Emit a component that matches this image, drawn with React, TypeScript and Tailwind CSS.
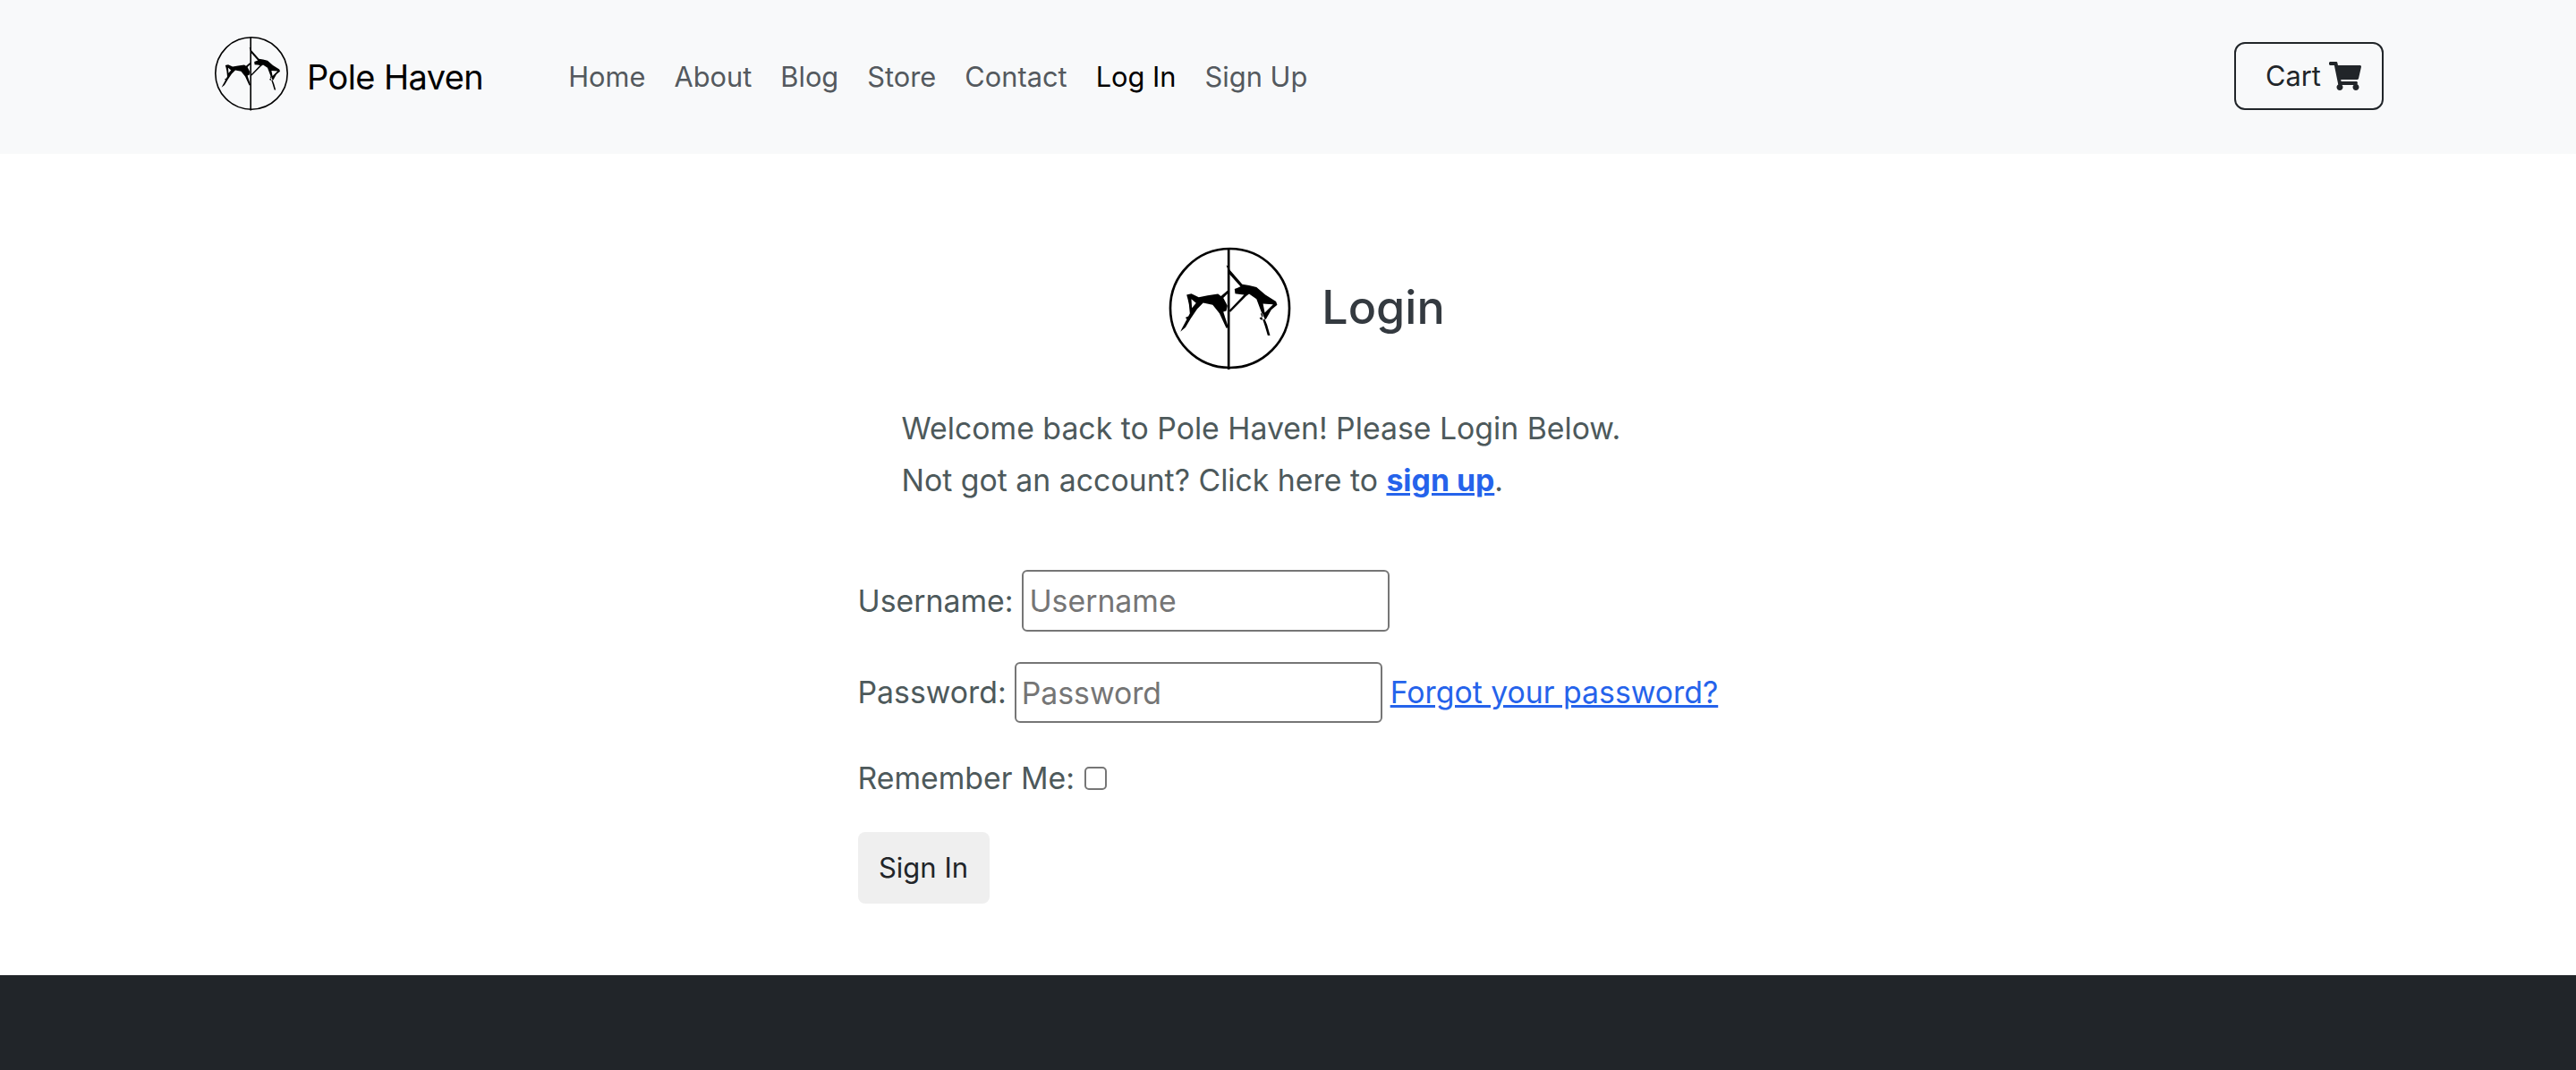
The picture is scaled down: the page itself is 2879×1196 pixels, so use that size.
import { FaShoppingCart } from "react-icons/fa";

function Logo({ className }: { className: string }) {
  return (
    <svg viewBox="70 43 420 420" className={className}>
      <circle cx="280" cy="253" r="201" fill="none" stroke="#000" strokeWidth="8" />
      <line x1="276" y1="50" x2="276" y2="460" stroke="#000" strokeWidth="8" />
      <path
        fillRule="evenodd"
        d="M134 208 L150 204 L175 216 L205 210 L240 205 L250 212 L272 193 L276 200 L258 218 L272 245 L268 262 L258 265 L275 318 L268 320 L245 270 L222 242 L190 235 L170 255 L148 288 L130 318 L113 332 L118 322 L135 290 L130 285 L140 280 L145 270 L142 240 L138 222 Z M150 222 L152 252 L166 236 Z"
        fill="#000"
      />
      <path
        fillRule="evenodd"
        d="M268 108 L276 112 L280 124 L322 172 L345 176 L370 182 L400 208 L436 230 L440 242 L420 258 L402 290 L385 292 L380 286 L392 280 L385 262 L370 222 L345 205 L335 212 L282 266 L276 262 L328 208 L315 206 L298 204 L296 188 L306 184 L316 180 L276 135 L272 118 Z M392 238 L398 268 L426 240 Z M390 270 L406 310 L416 345 L408 345 L398 312 L384 270 Z"
        fill="#000"
      />
    </svg>
  );
}

const links = ["Home", "About", "Blog", "Store", "Contact", "Log In", "Sign Up"];

export default function App() {
  return (
    <div className="min-h-[1196px] flex flex-col bg-white text-[33.8px] leading-[50px] text-[#4d595b] [font-family:Inter,sans-serif]">
      <nav className="h-[172px] bg-[#f8f9fa] flex items-center pl-[239px] pr-[215px] text-[30.8px]">
        <div className="flex items-center gap-[20px] text-[38px] text-black tracking-[-0.6px] pb-[1px]">
          <Logo className="w-[84px] h-[84px] -translate-y-[4px]" />
          <span>Pole Haven</span>
        </div>
        <ul className="flex ml-[95px] gap-[32px] grow">
          {links.map((l) => (
            <li key={l} className={l === "Log In" ? "text-black" : "text-[#54595e]"}>
              {l}
            </li>
          ))}
        </ul>
        <button className="w-[167px] h-[76px] -translate-y-[1px] border-2 border-[#212529] rounded-[12px] flex items-center justify-start pl-[33px] gap-[9px] text-[#212529]">
          Cart
          <FaShoppingCart className="w-[36px] h-[32px]" />
        </button>
      </nav>
      <main className="grow flex justify-center">
        <div className="w-[964px] pt-[103px]">
          <div className="flex items-center justify-center pl-[41px] gap-[33px]">
            <Logo className="w-[139px] h-[139px]" />
            <h1 className="text-[52px] leading-[67px] font-[550] text-[#343a40] -translate-y-[1px]">Login</h1>
          </div>
          <div className="mt-[36px] pl-[50px] leading-[58px]">
            <p>Welcome back to Pole Haven! Please Login Below.</p>
            <p>
              Not got an account? Click here to{" "}
              <a className="font-bold underline text-[#2563eb]">sign up</a>.
            </p>
          </div>
          <form className="mt-[71px] pl-[1px]">
            <div className="flex items-center gap-[10px] h-[69px]">
              <label>Username:</label>
              <input
                placeholder="Username"
                className="w-[411px] h-[69px] border-2 border-[#767676] rounded-[6px] px-[6px] placeholder:text-[#757575]"
              />
            </div>
            <div className="flex items-center gap-[9px] h-[68px] mt-[34px]">
              <label>Password:</label>
              <input
                placeholder="Password"
                className="w-[411px] h-[68px] border-2 border-[#767676] rounded-[6px] px-[6px] placeholder:text-[#757575]"
              />
              <a className="underline text-[#2563eb]">Forgot your password?</a>
            </div>
            <div className="flex items-center gap-[11px] mt-[38px] h-[48px]">
              <label>Remember Me:</label>
              <span className="w-[25px] h-[26px] border-2 border-[#767676] rounded-[5px]" />
            </div>
            <button
              type="button"
              className="mt-[36px] w-[147px] h-[80px] bg-[#efefef] rounded-[8px] text-[#212529] text-[31px]"
            >
              Sign In
            </button>
          </form>
        </div>
      </main>
      <footer className="h-[106px] bg-[#212529]" />
    </div>
  );
}
